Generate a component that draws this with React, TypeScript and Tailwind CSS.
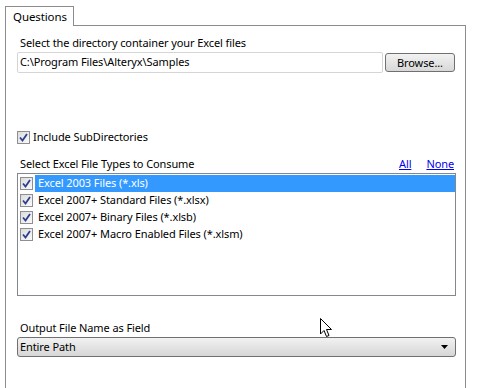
import React from 'react';

const font = { fontFamily: '"Noto Sans", "DejaVu Sans", sans-serif' };

function Check() {
  return (
    <span className="shrink-0 w-[13px] h-[13px] border border-[#8f8f8f] bg-gradient-to-br from-[#dcdcdc] to-[#fafafa] flex items-center justify-center">
      <svg width="9" height="9" viewBox="0 0 9 9">
        <path d="M1 4.5 L3.5 7.5 L8 1" fill="none" stroke="#2b3f8c" strokeWidth="1.8" />
      </svg>
    </span>
  );
}

const fileTypes = [
  'Excel 2003 Files (*.xls)',
  'Excel 2007+ Standard Files (*.xlsx)',
  'Excel 2007+ Binary Files (*.xlsb)',
  'Excel 2007+ Macro Enabled Files (*.xlsm)',
];

export default function App() {
  return (
    <div className="w-[478px] h-[388px] bg-white overflow-hidden text-[11px] tracking-[-0.1px] text-black relative" style={font}>
      {/* Tab strip */}
      <div className="pt-[5px] pl-[5px] flex">
        <div className="w-[69px] h-[20px] border border-b-0 border-[#8c8c8c] bg-white flex items-center pl-[7px] text-[11.5px] relative top-[1px] z-10">
          Questions
        </div>
      </div>

      {/* Panel */}
      <div className="ml-[5px] w-[461px] h-[400px] border border-[#8c8c8c] pl-[11px] pr-[10px]">
        <div className="pt-[10px] leading-[14px] pl-[3px]">Select the directory container your Excel files</div>
        <div className="mt-[2px] flex items-center gap-[2px]">
          <div className="w-[366px] h-[21px] border border-[#d5d5d5] rounded-[2px] flex items-center pl-[2px]">
            C:\Program Files\Alteryx\Samples
          </div>
          <button className="w-[70px] h-[19px] border border-[#707070] rounded-[3px] bg-gradient-to-b from-[#f2f2f2] to-[#d8d8d8] flex items-center justify-center leading-none">
            Browse...
          </button>
        </div>

        <div className="mt-[57px] flex items-center gap-[3px] h-[14px]">
          <Check />
          <span>Include SubDirectories</span>
        </div>

        <div className="mt-[13px] flex items-end justify-between h-[14px] leading-[14px] pl-[3px]">
          <span>Select Excel File Types to Consume</span>
          <span className="flex gap-[15px] pr-[1px]">
            <span className="text-[#0000ee] underline">All</span>
            <span className="text-[#0000ee] underline">None</span>
          </span>
        </div>

        <div className="mt-[2px] w-[439px] h-[123px] border border-[#828790] pt-[1px]">
          {fileTypes.map((t, i) => (
            <div key={t} className="h-[17px] flex items-center pl-[2px]">
              <Check />
              <span
                className={`ml-[2px] flex-1 h-[17px] flex items-center pl-[3px] ${
                  i === 0 ? 'bg-[#3399ff] text-white' : ''
                }`}
              >
                {t}
              </span>
            </div>
          ))}
        </div>

        <div className="mt-[25px] leading-[14px] pl-[3px]">Output File Name as Field</div>
        <div className="mt-[2px] w-[439px] h-[20px] border border-[#707070] rounded-[3px] bg-gradient-to-b from-[#f2f2f2] to-[#d6d6d6] flex items-center justify-between pl-[2px] pr-[7px]">
          <span>Entire Path</span>
          <svg width="7" height="4" viewBox="0 0 7 4">
            <path d="M0 0 H7 L3.5 4 Z" fill="#000" />
          </svg>
        </div>
      </div>

      {/* Mouse cursor */}
      <svg className="absolute left-[320px] top-[318px]" width="13" height="20" viewBox="0 0 13 20">
        <path d="M0.5 0.5 V16 L4 12.5 L6.5 18.5 L9 17.5 L6.5 11.5 H11.5 Z" fill="#fff" stroke="#000" strokeWidth="1" strokeLinejoin="round" />
      </svg>
    </div>
  );
}
